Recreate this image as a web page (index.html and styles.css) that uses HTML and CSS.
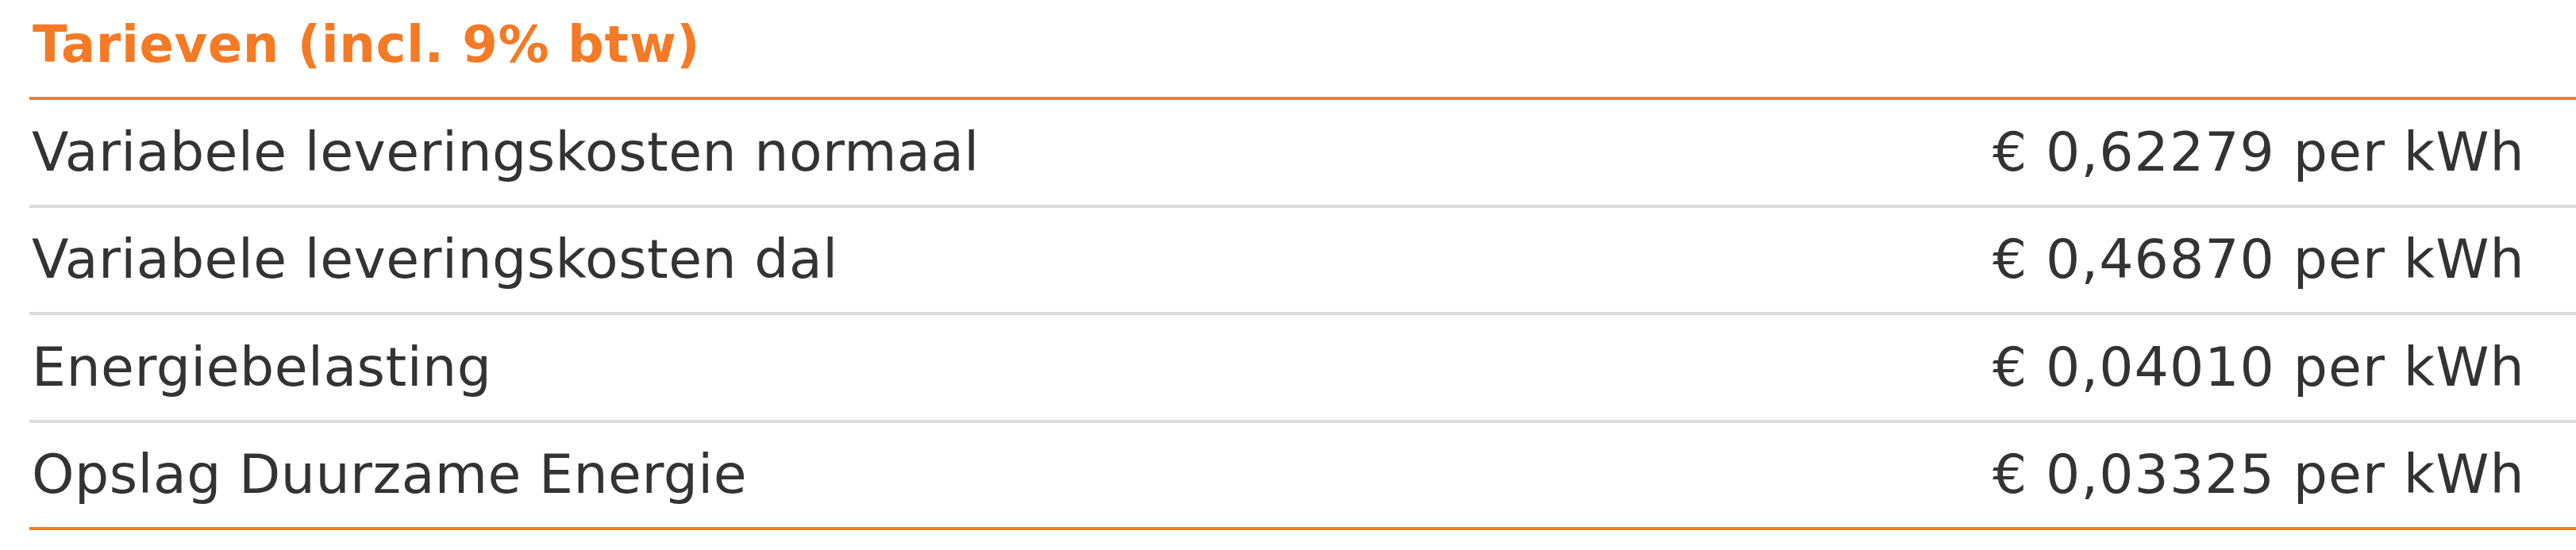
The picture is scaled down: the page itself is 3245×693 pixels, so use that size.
FILE: index.html
```html
<!DOCTYPE html>
<html lang="nl">
<head>
<meta charset="utf-8">
<title>Tarieven</title>
<link rel="stylesheet" href="styles.css">
</head>
<body>
<section class="rates">
  <h2 class="rates-title">Tarieven (incl. 9% btw)</h2>
  <div class="rates-table">
    <div class="rate-row">
      <span class="rate-label">Variabele leveringskosten normaal</span>
      <span class="rate-value">€ 0,62279 per kWh</span>
    </div>
    <div class="rate-row">
      <span class="rate-label">Variabele leveringskosten dal</span>
      <span class="rate-value">€ 0,46870 per kWh</span>
    </div>
    <div class="rate-row">
      <span class="rate-label">Energiebelasting</span>
      <span class="rate-value">€ 0,04010 per kWh</span>
    </div>
    <div class="rate-row">
      <span class="rate-label">Opslag Duurzame Energie</span>
      <span class="rate-value">€ 0,03325 per kWh</span>
    </div>
  </div>
</section>
</body>
</html>
```

FILE: styles.css
```css
html, body {
  margin: 0;
  padding: 0;
  background: #ffffff;
}

body {
  font-family: "DejaVu Sans", Verdana, sans-serif;
  color: #333333;
}

.rates {
  margin-left: 37px;
  width: calc(100% - 37px);
}

.rates-title {
  margin: 0;
  padding: 20px 0 30px 4px;
  font-size: 64px;
  line-height: 72px;
  font-weight: bold;
  color: #f47a25;
  letter-spacing: 0.6px;
}

.rates-table {
  border-top: 4px solid #f47a25;
  border-bottom: 4px solid #f47a25;
}

.rate-row {
  display: grid;
  grid-template-columns: 1fr 735px;
  align-items: center;
  height: 131.5px;
  font-size: 68px;
  line-height: 72px;
}

.rate-row + .rate-row {
  border-top: 4px solid #dcdcdc;
}

.rate-label {
  padding-left: 3px;
  letter-spacing: 0.5px;
}

.rate-value {
  letter-spacing: 1.1px;
}
```
